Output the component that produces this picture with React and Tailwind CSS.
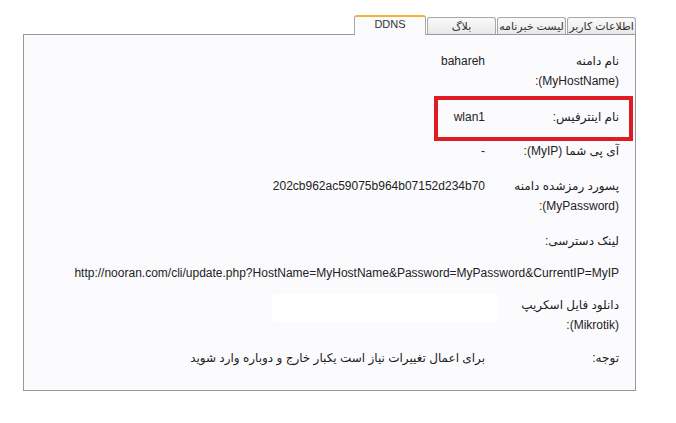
const tabs = [
  { label: "اطلاعات کاربر" },
  { label: "لیست خبرنامه" },
  { label: "بلاگ" },
  { label: "DDNS", active: true },
]

const Row = ({ label, value, className = "", valueClass = "" }) => (
  <div className={`flex items-start ${className}`}>
    <div className="w-[134px] shrink-0 leading-5">{label}</div>
    <div className={`leading-5 ${valueClass}`}>{value}</div>
  </div>
)

const App = () => {
  return (
    <div
      className="w-[676px] h-[423px] bg-white text-[12px] text-[#222]"
      style={{ fontFamily: '"Liberation Sans", "DejaVu Sans", Tahoma, sans-serif' }}
    >
      <div className="w-[613px] ml-[23px]">
        {/* tabs */}
        <div dir="rtl" className="flex items-end h-[34px] gap-px">
          {tabs.map((t) =>
            t.active ? (
              <div
                key={t.label}
                className="w-[72px] h-[20px] -mb-px relative z-10 bg-[#fbfbfd] border border-b-0 border-[#aaa] border-t-2 border-t-[#f2b233] rounded-t-[3px] text-center text-[11px] leading-[15px] text-[#333]"
              >
                {t.label}
              </div>
            ) : (
              <div
                key={t.label}
                className="w-[69px] h-[17px] bg-gradient-to-b from-[#fafafa] to-[#e8e8e8] border border-b-0 border-[#a9a9a9] rounded-t-[3px] text-center text-[11px] leading-[16px] text-[#333] whitespace-nowrap overflow-hidden"
              >
                {t.label}
              </div>
            )
          )}
        </div>

        {/* panel */}
        <div dir="rtl" className="relative h-[357px] border border-[#999] bg-[#fbfbfd] pr-[16px] pt-[16px]">
          <Row
            label={
              <>
                نام دامنه
                <br />
                (MyHostName):
              </>
            }
            value="bahareh"
          />
          <Row className="mt-[16px]" label="نام اینترفیس:" value="wlan1" />
          <Row className="mt-[14px]" label="آی پی شما (MyIP):" value="-" />
          <Row
            className="mt-[15px]"
            label={
              <>
                پسورد رمزشده دامنه
                <br />
                (MyPassword):
              </>
            }
            value="202cb962ac59075b964b07152d234b70"
          />
          <div className="mt-[15px] leading-5">لینک دسترسی:</div>
          <div dir="ltr" className="mt-[12px] leading-5 text-right">
            http://nooran.com/cli/update.php?HostName=MyHostName&amp;Password=MyPassword&amp;CurrentIP=MyIP
          </div>
          <Row
            className="mt-[12px]"
            label={
              <>
                دانلود فایل اسکریپ
                <br />
                (Mikrotik):
              </>
            }
            value={<div className="w-[226px] h-[28px] -mt-[1px] -mr-[13px] bg-white rounded-[4px]" />}
          />
          <Row
            className="mt-[13px]"
            label="توجه:"
            value="برای اعمال تغییرات نیاز است یکبار خارج و دوباره وارد شوید"
            valueClass="text-[12px]"
          />

          {/* annotation */}
          <div className="absolute left-[410px] top-[61px] w-[199px] h-[45px] border-4 border-[#e01b24]" />
        </div>
      </div>
    </div>
  )
}

export default App
